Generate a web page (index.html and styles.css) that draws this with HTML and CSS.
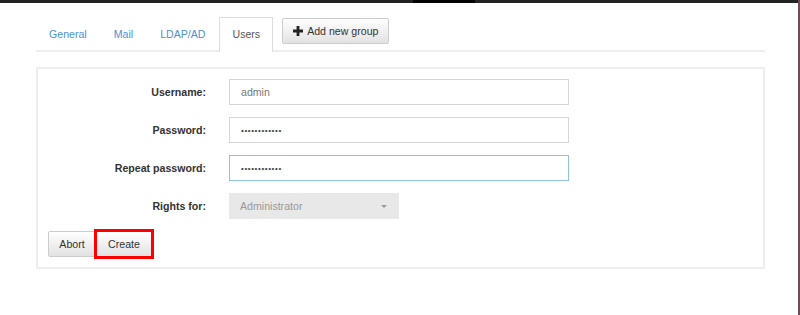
FILE: index.html
```html
<!DOCTYPE html>
<html lang="en">
<head>
    <meta charset="UTF-8">
    <meta name="viewport" content="width=device-width, initial-scale=1.0">
    <title>Users</title>
    <link rel="stylesheet" href="styles.css">
</head>
<body>
    <div id="tela">
        <div id="barra-topo"><span class="barra-escura"></span></div>

        <div id="conteudo">
            <div id="abas">
                <a class="aba" href="#">General</a>
                <a class="aba" href="#">Mail</a>
                <a class="aba" href="#">LDAP/AD</a>
                <a class="aba ativa" href="#">Users</a>
                <button class="botao botao-grupo">
                    <svg width="10" height="10" viewBox="0 0 10 10"><path d="M3.6 0h2.8v3.6H10v2.8H6.4V10H3.6V6.4H0V3.6h3.6z" fill="#222"/></svg>
                    Add new group
                </button>
            </div>

            <form id="painel">
                <div class="linha">
                    <label for="usuario">Username:</label>
                    <input id="usuario" class="campo" type="text" value="admin">
                </div>
                <div class="linha">
                    <label for="senha">Password:</label>
                    <input id="senha" class="campo" type="password" value="************">
                </div>
                <div class="linha">
                    <label for="repetir">Repeat password:</label>
                    <input id="repetir" class="campo foco" type="password" value="************">
                </div>
                <div class="linha">
                    <label for="direitos">Rights for:</label>
                    <div class="seletor">
                        <select id="direitos" disabled>
                            <option>Administrator</option>
                        </select>
                    </div>
                </div>
                <div id="container-botoes">
                    <button type="button" class="botao abortar">Abort</button>
                    <button type="button" class="botao marcado">Create</button>
                </div>
            </form>
        </div>
    </div>
</body>
</html>
```

FILE: styles.css
```css
body{
    margin: 0;
    padding: 0;
    background-color: #fff;
    font-family: "Liberation Sans", Arial, sans-serif;
    font-size: 10.6px;
    color: #333;
}

#tela{
    height: 315px;
    border-right: 2px solid #6e4c5a;
    box-sizing: border-box;
}

#barra-topo{
    height: 3px;
    background-color: #232323;
    position: relative;
}

.barra-escura{
    position: absolute;
    left: 413px;
    width: 62px;
    height: 3px;
    background-color: #050505;
}

#conteudo{
    width: 729px;
    margin-left: 36px;
    padding-top: 14px;
}

#abas{
    display: flex;
    align-items: flex-start;
    border-bottom: 2px solid #eee;
    height: 33px;
}

.aba{
    display: block;
    padding: 0 12px;
    margin-right: 1px;
    height: 32px;
    line-height: 32px;
    color: #4d8fd1;
    text-decoration: none;
    border: 1px solid transparent;
    border-bottom: none;
}

.aba.ativa{
    color: #555;
    background-color: #fff;
    border-color: #ddd;
    height: 34px;
}

.botao{
    font-family: inherit;
    font-size: 10.6px;
    color: #333;
    height: 26px;
    padding: 0 10px;
    border: 1px solid #ccc;
    border-radius: 2px;
    background: linear-gradient(#fff, #e2e2e2);
    cursor: pointer;
}

.botao-grupo{
    margin-left: 8px;
    margin-top: 1px;
    display: flex;
    align-items: center;
    gap: 4px;
}

#painel{
    margin: 15px 0 0 0;
    border: 2px solid #eee;
    padding: 10px;
    display: flex;
    flex-direction: column;
    gap: 12px;
}

.linha{
    display: flex;
    align-items: center;
}

.linha label{
    width: 168px;
    text-align: right;
    font-weight: bold;
    color: #333;
    margin-right: 23px;
    margin-left: -10px;
}

.campo{
    width: 340px;
    height: 26px;
    box-sizing: border-box;
    border: 1px solid #d6d6d6;
    padding: 0 11px;
    font-family: inherit;
    font-size: 10.6px;
    color: #777;
    outline: none;
}

.campo[type=password]{
    font-size: 8px;
    letter-spacing: 0.6px;
    color: #444;
}

.campo.foco{
    border-color: #8fc1ea;
}

.seletor{
    position: relative;
    width: 170px;
}

.seletor select{
    appearance: none;
    width: 170px;
    height: 26px;
    border: none;
    background-color: #e8e8e8;
    padding: 0 11px;
    font-family: inherit;
    font-size: 10.6px;
    color: #9a9a9a;
    opacity: 1;
}

.seletor::after{
    content: "";
    position: absolute;
    right: 12px;
    top: 12px;
    border-left: 3px solid transparent;
    border-right: 3px solid transparent;
    border-top: 3px solid #999;
}

#container-botoes{
    display: flex;
}

.abortar{
    width: 48px;
    padding: 0;
    border-radius: 2px 0 0 2px;
}

.marcado{
    width: 56px;
    padding: 0;
    border-radius: 0;
    outline: 3px solid #f00;
    outline-offset: -1px;
}
```
